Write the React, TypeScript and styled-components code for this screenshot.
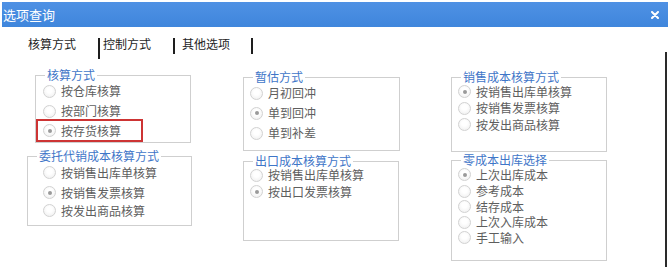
import React from "react";
import styled, { createGlobalStyle } from "styled-components";

const Global = createGlobalStyle`
  html, body { margin: 0; padding: 0; background: #ffffff; }
  body { font-family: "Noto Sans CJK SC", "Noto Sans", sans-serif; }
  * { box-sizing: border-box; }
`;

const Page = styled.div`
  width: 672px;
  height: 267px;
  background: #ffffff;
  overflow: hidden;
  display: flex;
  flex-direction: column;
`;

const TitleBar = styled.div`
  margin: 2px 4px 0 2px;
  height: 25px;
  flex: none;
  background: linear-gradient(#4f91e4, #3f86dc);
  display: flex;
  align-items: center;
  justify-content: space-between;
  padding: 0 9px 0 1px;
`;

const TitleText = styled.span`
  color: #ffffff;
  font-size: 13px;
  line-height: 15px;
`;

const CloseIcon = styled.svg`
  display: block;
  width: 8px;
  height: 8px;
  margin-top: 1px;
`;

const BodyRow = styled.div`
  flex: 1;
  display: flex;
`;

const Content = styled.div`
  flex: 1;
  display: flex;
  flex-direction: column;
`;

const EdgeLine = styled.div`
  width: 2px;
  margin: 25px 5px 0 0;
  background: #2a2a2a;
`;

const TabBar = styled.div`
  display: flex;
  align-items: flex-start;
  padding: 10px 0 0 28px;
  height: 30px;
  flex: none;
`;

const Tab = styled.span<{ $ml: number }>`
  margin-left: ${(p) => p.$ml}px;
  font-size: 12px;
  line-height: 14px;
  color: #1e1e1e;
`;

const TabSep = styled.span<{ $ml: number; $h: number }>`
  margin-left: ${(p) => p.$ml}px;
  margin-top: 1px;
  width: 2px;
  height: ${(p) => p.$h}px;
  background: #1e1e1e;
`;

const Columns = styled.div`
  margin-top: 12px;
  padding-left: 27px;
  display: grid;
  grid-template-columns: 216px 208px 1fr;
  align-items: start;
`;

const Column = styled.div<{ $pt: number }>`
  display: flex;
  flex-direction: column;
  padding-top: ${(p) => p.$pt}px;
`;

const Group = styled.fieldset<{ $w: number; $ml: number; $mt: number; $pb: number }>`
  margin: ${(p) => p.$mt}px 0 0 ${(p) => p.$ml}px;
  width: ${(p) => p.$w}px;
  padding: 0 0 ${(p) => p.$pb}px 0;
  border: 1px solid #cfcfcf;
  min-width: 0;
`;

const Legend = styled.legend`
  margin-left: 9px;
  padding: 0 2px;
  font-size: 12px;
  line-height: 12px;
  color: #3f76c8;
`;

const Item = styled.div<{ $h: number; $indent: number; $hl?: boolean }>`
  display: flex;
  align-items: center;
  height: ${(p) => (p.$hl ? p.$h + 3 : p.$h)}px;
  padding-left: ${(p) => (p.$hl ? p.$indent - 2 : p.$indent)}px;
  margin-top: ${(p) => (p.$hl ? -2 : 0)}px;
  width: ${(p) => (p.$hl ? "107px" : "auto")};
  border: ${(p) => (p.$hl ? "2px solid #cd3434" : "none")};
`;

const Radio = styled.span<{ $on: boolean }>`
  position: relative;
  width: 13px;
  height: 13px;
  border-radius: 50%;
  border: 1px solid #d2d2d2;
  background: radial-gradient(circle at 50% 40%, #ffffff 30%, #ececec 100%);
  margin-right: 5px;
  flex: none;
  &::after {
    content: "";
    display: ${(p) => (p.$on ? "block" : "none")};
    position: absolute;
    left: 3.5px;
    top: 3.5px;
    width: 4px;
    height: 4px;
    border-radius: 50%;
    background: #9a9a9a;
  }
`;

const Label = styled.span`
  font-size: 12px;
  line-height: 12px;
  color: #5e5e5e;
`;

type GroupDef = {
  title: string;
  items: string[];
  rows: number[];
  selected: number;
  indent: number;
  width: number;
  ml: number;
  mt: number;
  pb: number;
  highlight?: number;
};

const columns: { pt: number; groups: GroupDef[] }[] = [
  {
    pt: 0,
    groups: [
      {
        title: "核算方式",
        items: ["按仓库核算", "按部门核算", "按存货核算"],
        rows: [20, 20, 20],
        selected: 2,
        indent: 7,
        width: 156,
        ml: 8,
        mt: 0,
        pb: 0,
        highlight: 2,
      },
      {
        title: "委托代销成本核算方式",
        items: ["按销售出库单核算", "按销售发票核算", "按发出商品核算"],
        rows: [21, 19, 17],
        selected: 1,
        indent: 15,
        width: 165,
        ml: 0,
        mt: 7,
        pb: 6,
      },
    ],
  },
  {
    pt: 2,
    groups: [
      {
        title: "暂估方式",
        items: ["月初回冲", "单到回冲", "单到补差"],
        rows: [20, 20, 20],
        selected: 1,
        indent: 6,
        width: 157,
        ml: 0,
        mt: 0,
        pb: 7,
      },
      {
        title: "出口成本核算方式",
        items: ["按销售出库单核算", "按出口发票核算"],
        rows: [16, 17],
        selected: 1,
        indent: 6,
        width: 156,
        ml: 0,
        mt: 4,
        pb: 40,
      },
    ],
  },
  {
    pt: 2,
    groups: [
      {
        title: "销售成本核算方式",
        items: ["按销售出库单核算", "按销售发票核算", "按发出商品核算"],
        rows: [17, 16, 17],
        selected: 0,
        indent: 6,
        width: 156,
        ml: 0,
        mt: 0,
        pb: 18,
      },
      {
        title: "零成本出库选择",
        items: ["上次出库成本", "参考成本", "结存成本", "上次入库成本", "手工输入"],
        rows: [17, 16, 15, 16, 15],
        selected: 0,
        indent: 6,
        width: 156,
        ml: 0,
        mt: 2,
        pb: 15,
      },
    ],
  },
];

function OptionGroup({ g }: { g: GroupDef }) {
  return (
    <Group $w={g.width} $ml={g.ml} $mt={g.mt} $pb={g.pb}>
      <Legend>{g.title}</Legend>
      {g.items.map((label, i) => (
        <Item key={label} $h={g.rows[i]} $indent={g.indent} $hl={g.highlight === i}>
          <Radio $on={g.selected === i} />
          <Label>{label}</Label>
        </Item>
      ))}
    </Group>
  );
}

export default function App() {
  return (
    <>
      <Global />
      <Page>
        <TitleBar>
          <TitleText>选项查询</TitleText>
          <CloseIcon viewBox="0 0 8 8">
            <path d="M1 1 L7 7 M7 1 L1 7" stroke="#ffffff" strokeWidth="2" strokeLinecap="round" />
          </CloseIcon>
        </TitleBar>
        <BodyRow>
          <Content>
            <TabBar>
              <Tab $ml={0}>核算方式</Tab>
              <TabSep $ml={22} $h={21} />
              <Tab $ml={3}>控制方式</Tab>
              <TabSep $ml={22} $h={16} />
              <Tab $ml={7}>其他选项</Tab>
              <TabSep $ml={21} $h={16} />
            </TabBar>
            <Columns>
              {columns.map((c, ci) => (
                <Column key={ci} $pt={c.pt}>
                  {c.groups.map((g) => (
                    <OptionGroup key={g.title} g={g} />
                  ))}
                </Column>
              ))}
            </Columns>
          </Content>
          <EdgeLine />
        </BodyRow>
      </Page>
    </>
  );
}
